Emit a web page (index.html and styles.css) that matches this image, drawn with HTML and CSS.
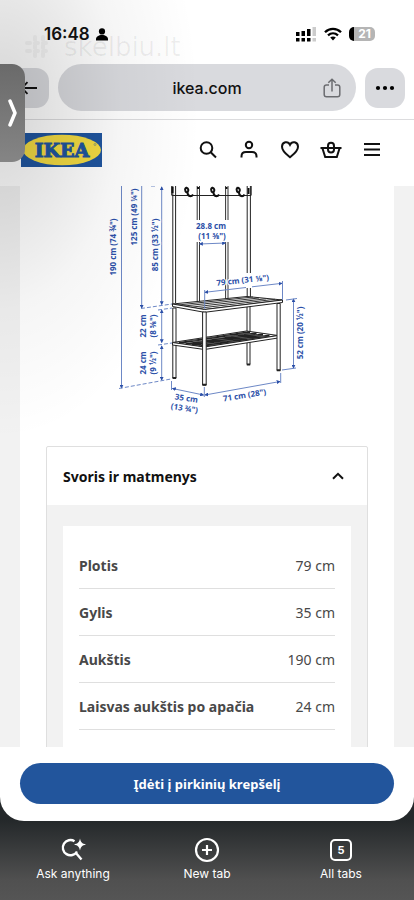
FILE: index.html
```
<!DOCTYPE html>
<html lang="lt">
<head>
  <meta charset="UTF-8">
  <meta name="viewport" content="width=device-width,initial-scale=1.0">
  <title>ikea.com</title>
  <link rel="stylesheet" href="styles.css">
</head>
<body>
  <div class="browser">
    <div class="status">
      <span class="time">16:48</span>
      <svg class="person" width="12" height="13" viewBox="0 0 12 13"><circle cx="6" cy="3.400" r="3.100"/><path d="M0 12.500V11c0-2.300 2.500-4 6-4s6 1.700 6 4v1.500z"/></svg>
      <div class="status-right">
        <svg width="21" height="15" viewBox="0 0 21 15">
          <path d="M0 5h3.500v4H0zM5.500 4H9v5H5.500zM11 2h3.500v7H11zM0 11h3.500v3.500H0zM5.500 11H9v3.500H5.500zM11 11h3.500v3.500H11z"/>
          <path fill="#ccc" d="M16.500 0H20v9h-3.500zM16.500 11H20v3.500h-3.500z"/>
        </svg>
        <svg width="18" height="14" viewBox="0 0 18 14">
          <path d="M1 5.200C5.500.7 12.500.7 17 5.200M4 8.400c3-2.700 7-2.700 10 0" fill="none" stroke="#000" stroke-width="2.300"/>
          <path d="M9 13.500l-2.800-2.900c1.600-1.400 4-1.400 5.600 0z"/>
        </svg>
        <span class="battery">21</span>
      </div>
    </div>

    <div class="toolbar">
      <button class="round-btn" aria-label="Back">
        <svg width="18" height="14" viewBox="0 0 18 14"><path d="M17 7H2M7.500 1.200L1.800 7l5.700 5.800" fill="none" stroke="#111" stroke-width="1.800"/></svg>
      </button>
      <div class="address">
        <a href="#">ikea.com</a>
        <button class="share" aria-label="Share">
          <svg width="18" height="20" viewBox="0 0 18 20"><path d="M6 7H3.500C2 7 1.200 7.800 1.200 9.200v7.300c0 1.500.8 2.300 2.300 2.300h11c1.500 0 2.300-.8 2.300-2.300V9.200C16.800 7.800 16 7 14.500 7H12M9 13.500V1.500M5.300 4.800L9 1.200l3.700 3.600" fill="none" stroke="#6b6c70" stroke-width="1.500"/></svg>
        </button>
      </div>
      <button class="round-btn" aria-label="More">
        <svg width="20" height="6" viewBox="0 0 20 6"><circle cx="3" cy="3" r="2.100"/><circle cx="10" cy="3" r="2.100"/><circle cx="17" cy="3" r="2.100"/></svg>
      </button>
    </div>

    <header class="shop-header">
      <a class="logo" href="#" aria-label="IKEA">
        <svg width="81" height="34" viewBox="0 0 81 34">
          <path fill="#1f559f" d="M0 0h81v34H0z"/>
          <ellipse cx="41" cy="17" rx="39" ry="15.300" fill="#f4dc43"/>
          <text x="41" y="23.500" class="logo-text">IKEA</text>
          <circle cx="74" cy="11.500" r="1" fill="none" stroke="#1f559f" stroke-width=".4"/>
        </svg>
      </a>
      <nav class="shop-nav">
        <button aria-label="Search"><svg width="24" height="24" viewBox="0 0 24 24"><circle cx="10.500" cy="10" r="5.800"/><path d="M14.700 14.300l5.300 5.200"/></svg></button>
        <button aria-label="Account"><svg width="24" height="24" viewBox="0 0 24 24"><circle cx="12" cy="7" r="3.200"/><path d="M4.500 19.500v-1.200c0-2.700 2-4.300 4.500-4.300h6c2.500 0 4.500 1.600 4.500 4.300v1.200"/></svg></button>
        <button aria-label="Favourites"><svg width="24" height="24" viewBox="0 0 24 24"><path d="M12 19.200C9.500 17.200 4 13.500 4 8.800c0-5 6-6.300 8-2.100 2-4.200 8-2.900 8 2.100 0 4.700-5.500 8.400-8 10.400z"/></svg></button>
        <button aria-label="Cart"><svg width="24" height="24" viewBox="0 0 24 24"><path d="M1.500 10h21M3.500 10.500l2.700 8.500h11.600l2.700-8.500"/><path d="M9 10.500V8c0-4.200 6-4.200 6 0v3.500c0 4-6 4-6 0z"/></svg></button>
        <button aria-label="Menu"><svg width="24" height="24" viewBox="0 0 24 24"><path d="M4 6h16M4 11.500h16M4 17h16"/></svg></button>
      </nav>
    </header>

    <main class="page">
      <div class="sheet">
        <svg class="drawing" viewBox="20 186 374 237" role="img" aria-label="Matmenys">
          <defs>
            <marker id="tip" viewBox="0 0 6 6" refX="5" refY="3" markerWidth="4" markerHeight="4" markerUnits="userSpaceOnUse" orient="auto-start-reverse"><path d="M0 0l6 3-6 3z" fill="#2b4fa8"/></marker>
          </defs>

          <!-- back posts and hook rail -->
          <g class="frame">
            <path d="M172.800 186v118M175.600 186v117M247.200 186v111M250.400 186v111"/>
            <path class="inner" d="M197.200 186v116M199.500 186v116M225.600 186v113M228 186v113"/>
            <path d="M172 195.500h79M171.700 186v9.500M251.200 186v9.500"/>
            <path class="hook" d="M186 187.500c-2 2 0 6 1.500 4.500s1-4-1.500-4.500M187.500 192c0 5 4 5 5.500 2.500M212 187.500c-2 2 0 6 1.500 4.500s1-4-1.500-4.500M213.500 192c0 5 4 5 5.500 2.500M237.500 187.500c-2 2 0 6 1.500 4.500s1-4-1.500-4.500M239 192c0 5 4 5 5.500 2.500M172.500 187v6M198 187v2M226.500 187v2M248.500 188v6"/>
          </g>

          <!-- legs behind the shelf -->
          <g class="leg">
            <path d="M172.800 308h3.200v70h-3.200zM247 303h3v61.500h-3z"/>
          </g>

          <!-- lower shelf -->
          <g class="frame">
            <path class="board" d="M172.500 342.500L246.500 331l31.500 4.500-73.500 11.500z"/>
            <path class="slat" d="M179 343l71-11M185.500 344.200l71-11M192 345.300l71-11M198.500 346.400l71-11"/>
            <path class="fine" d="M190 340l30 5M207 337l30 5M224 334.500l30 5M238 332.500l30 5"/>
            <path class="board" d="M172.500 342.500l32 4.500 73.500-11.500v2.500l-73.500 11.500-32-4.500z"/>
          </g>

          <!-- seat -->
          <g class="frame">
            <path class="board" d="M172.500 304L247 296.500l35.500 3.500-78 9.500z"/>
            <path class="seat-line" d="M178 305l75-8M184 306l75-8M191 307.200l75-8.400M198 308.300l77-9"/>
            <path class="board" d="M172.500 304l32 5.500L282.500 300v2.500l-78 9.800-32-5.800z"/>
          </g>

          <!-- front legs -->
          <g class="leg">
            <path d="M202.600 312h3.600v73h-3.600zM277 303.500h3.200v67H277z"/>
            <path class="foot" d="M202.400 384.800h4M172.600 378h3.600M276.800 370.300h3.600M246.800 364.500h3.400"/>
          </g>

          <g class="dim">
            <path marker-end="url(#tip)" d="M121.500 186v202"/>
            <path marker-end="url(#tip)" d="M141.700 186v122"/>
            <path marker-start="url(#tip)" marker-end="url(#tip)" d="M161.700 187v117.500"/>
            <path marker-start="url(#tip)" marker-end="url(#tip)" d="M161.700 310v32.500"/>
            <path marker-start="url(#tip)" marker-end="url(#tip)" d="M161.700 346v34"/>
            <path marker-start="url(#tip)" marker-end="url(#tip)" d="M293.500 299v69"/>
            <path marker-start="url(#tip)" marker-end="url(#tip)" d="M199.500 244l26-1"/>
            <path marker-start="url(#tip)" marker-end="url(#tip)" d="M172.500 388.500l31 6.500"/>
            <path marker-start="url(#tip)" marker-end="url(#tip)" d="M205 395l75-13.500"/>
            <path marker-start="url(#tip)" marker-end="url(#tip)" d="M205 292.300l77-9"/>
            <path d="M204.700 290v19M282.500 281v19M171.500 381v9M204.300 387v10M280.700 373v10M286 300l11-1.500M282 370l14-2"/>
            <path class="dash" d="M119 388.500l52-9.500M141 308.500l31-4.500M158 310l14-2M158 345l14-2M151 186h6"/>
          </g>

          <path fill="#fff" d="M195 220h34v22h-34zM246 273h6v15h-6z"/>
          <g class="dim-text">
            <text transform="translate(116 247) rotate(-90)">190 cm (74 ¾")</text>
            <text transform="translate(137 217) rotate(-90)">125 cm (49 ¼")</text>
            <text transform="translate(158 245) rotate(-90)">85 cm (33 ½")</text>
            <text x="211" y="229">28.8 cm</text>
            <text x="212" y="239">(11 ⅜")</text>
            <text transform="translate(243 283) rotate(-6)">79 cm (31 ⅛")</text>
            <text transform="translate(146 326) rotate(-90)">22 cm</text>
            <text transform="translate(156 326) rotate(-90)">(8 ⅝")</text>
            <text transform="translate(146 363) rotate(-90)">24 cm</text>
            <text transform="translate(156 363) rotate(-90)">(9 ½")</text>
            <text transform="translate(303 333) rotate(-90)">52 cm (20 ½")</text>
            <text transform="translate(186 401) rotate(9)">35 cm</text>
            <text transform="translate(184 411) rotate(9)">(13 ¾")</text>
            <text transform="translate(245 398) rotate(-9)">71 cm (28")</text>
          </g>
        </svg>

        <section class="accordion">
          <button class="accordion-head" aria-expanded="true">
            Svoris ir matmenys
            <svg width="12" height="8" viewBox="0 0 12 8"><path d="M1 6.800l5-5 5 5" fill="none" stroke="#111" stroke-width="2"/></svg>
          </button>
          <div class="accordion-body">
            <table class="specs">
              <tr><th scope="row">Plotis</th><td>79 cm</td></tr>
              <tr><th scope="row">Gylis</th><td>35 cm</td></tr>
              <tr><th scope="row">Aukštis</th><td>190 cm</td></tr>
              <tr><th scope="row">Laisvas aukštis po apačia</th><td>24 cm</td></tr>
            </table>
          </div>
        </section>
      </div>
    </main>

    <div class="buy">
      <button class="buy-btn">Įdėti į pirkinių krepšelį</button>
    </div>

    <div class="shade"></div>
    <div class="watermark">
      <svg width="34" height="26" viewBox="0 0 34 26"><path d="M13 3v20M21 3v20M5 9h24M5 17h24" stroke-width="4" stroke-linecap="round" stroke-dasharray="3 5"/></svg>
      <span>skelbiu.lt</span>
    </div>
    <button class="handle" aria-label="Open">
      <svg width="10" height="28" viewBox="0 0 10 28"><path d="M2 2l5 12-5 12" fill="none" stroke="#fff" stroke-width="3.500" stroke-linecap="round" stroke-linejoin="round"/></svg>
    </button>
  </div>

  <nav class="tabbar">
    <button>
      <svg width="26" height="26" viewBox="0 0 26 26"><path d="M14.500 4.200A7.600 7.600 0 1 0 17 14.500M15.500 15.500l6 7" fill="none" stroke="#fff" stroke-width="2.400"/><path d="M20 1.500c.8 3.800 2 5 6 6-4 1-5.200 2.200-6 6-.8-3.800-2-5-6-6 4-1 5.200-2.200 6-6z" fill="#fff"/></svg>
      Ask anything
    </button>
    <button>
      <svg width="26" height="26" viewBox="0 0 26 26" fill="none" stroke="#fff" stroke-width="2.200"><circle cx="13" cy="13" r="11"/><path d="M13 8v10M8 13h10"/></svg>
      New tab
    </button>
    <button>
      <span class="tab-count">5</span>
      All tabs
    </button>
  </nav>
</body>
</html>
```
FILE: styles.css
```
* {
  box-sizing: border-box;
}
body {
  margin: 0;
  height: 100vh;
  display: flex;
  flex-direction: column;
  background: linear-gradient(#24282a 0, #24282a calc(100vh - 80px), #505050 calc(100vh - 20px), #555 100vh);
  font-family: "Noto Sans", sans-serif;
  color: #111;
}
button {
  border: none;
  background: none;
  padding: 0;
  margin: 0;
  font-family: inherit;
  color: inherit;
  cursor: pointer;
}
svg {
  display: block;
}
.browser {
  position: relative;
  flex: 1;
  min-height: 0;
  display: flex;
  flex-direction: column;
  background: #fff;
  border-radius: 0 0 24px 24px;
  overflow: hidden;
}

/* status bar */
.status {
  display: flex;
  align-items: center;
  height: 64px;
  padding: 4px 39px 0 44px;
  font-family: Inter, sans-serif;
}
.time {
  font-size: 17px;
  font-weight: 600;
  line-height: 18px;
}
.person {
  margin-left: 6px;
}
.status-right {
  margin-left: auto;
  display: flex;
  align-items: center;
  gap: 7px;
}
.battery {
  width: 26px;
  height: 14px;
  padding-left: 5px;
  border-radius: 5px;
  background: linear-gradient(90deg, #000 20%, #b5b5b5 20%);
  color: #fff;
  font-size: 12px;
  font-weight: 700;
  line-height: 14px;
  text-align: center;
}

/* address bar */
.toolbar {
  display: flex;
  align-items: center;
  gap: 9px;
  padding: 0 9px 8px;
  border-bottom: 1px solid #dcdcde;
}
.round-btn {
  width: 40px;
  height: 40px;
  border-radius: 13px;
  background: #d9dade;
  display: flex;
  align-items: center;
  justify-content: center;
}
.address {
  position: relative;
  flex: 1;
  height: 47px;
  border-radius: 24px;
  background: #d9dade;
  display: flex;
  align-items: center;
  justify-content: center;
  font-family: Inter, sans-serif;
  font-size: 16px;
  font-weight: 500;
}
.address a {
  color: #111;
  text-decoration: none;
}
.share {
  position: absolute;
  right: 15px;
}

/* shop header */
.shop-header {
  display: flex;
  align-items: center;
  justify-content: space-between;
  height: 66px;
  padding: 0 30px 6px 21px;
}
.logo-text {
  font-family: "DejaVu Serif", serif;
  font-size: 19px;
  font-weight: 700;
  text-anchor: middle;
  fill: #1f559f;
  stroke: #1f559f;
  stroke-width: 1px;
}
.shop-nav {
  display: flex;
  gap: 17px;
}
.shop-nav svg {
  fill: none;
  stroke: #111;
  stroke-width: 2;
}

/* page */
.page {
  flex: 1;
  min-height: 0;
  overflow: hidden;
  background: #f2f2f2;
  padding: 0 20px;
}
.sheet {
  background: #fff;
  padding-bottom: 40px;
}
.drawing {
  width: 100%;
}
.frame path {
  fill: none;
  stroke: #222;
  stroke-width: 1;
}
.frame .inner {
  stroke: #333;
}
.frame .hook {
  stroke: #111;
  stroke-width: 2;
}
.frame .board {
  fill: #fff;
}
.frame .slat {
  stroke-width: 2;
}
.frame .fine {
  stroke: #555;
}
.frame .seat-line {
  stroke: #333;
  stroke-width: 1;
}
.leg path {
  fill: #fff;
  stroke: #222;
}
.leg .foot {
  stroke-width: 2;
}
.dim path {
  fill: none;
  stroke: #6d88c6;
  stroke-width: 1;
}
.dim .dash {
  stroke-dasharray: 4 2;
}
.dim-text text {
  font-size: 8px;
  font-weight: 700;
  text-anchor: middle;
  fill: #2b4fa8;
  stroke: #fff;
  stroke-width: 2px;
  paint-order: stroke;
}

.accordion {
  margin: 23px 26px 0;
  border: 1px solid #dfdfdf;
  border-radius: 2px;
}
.accordion-head {
  width: 100%;
  height: 58px;
  padding: 0 23px 0 16px;
  display: flex;
  align-items: center;
  justify-content: space-between;
  font-size: 14px;
  font-weight: 700;
}
.accordion-body {
  background: #f2f2f2;
  padding: 21px 16px;
}
.specs {
  width: 100%;
  border-collapse: separate;
  border-spacing: 0;
  background: #fff;
  padding: 16px 16px 40px;
  font-size: 14px;
  color: #484848;
}
.specs th,
.specs td {
  height: 47px;
  padding: 0;
  border-bottom: 1px solid #dfdfdf;
  text-align: left;
}
.specs td {
  text-align: right;
}

.buy {
  padding: 16px 20px 17px;
}
.buy-btn {
  width: 100%;
  height: 41px;
  border-radius: 21px;
  background: #22559c;
  color: #fff;
  font-size: 13px;
  font-weight: 700;
}

/* overlays */
.shade {
  position: absolute;
  inset: 0;
  background: radial-gradient(ellipse 200px 330px at 0 110px, rgba(0, 0, 0, 0.17), rgba(0, 0, 0, 0.04) 60%, transparent);
  pointer-events: none;
}
.watermark {
  position: absolute;
  top: 34px;
  left: 22px;
  display: flex;
  align-items: center;
  gap: 8px;
  font-family: "DejaVu Sans", sans-serif;
  font-size: 26px;
  line-height: 26px;
  color: rgba(0, 0, 0, 0.06);
  pointer-events: none;
}
.watermark svg {
  stroke: rgba(0, 0, 0, 0.04);
}
.handle {
  position: absolute;
  top: 64px;
  left: 0;
  width: 25px;
  height: 98px;
  padding-left: 8px;
  border-radius: 0 13px 13px 0;
  background: linear-gradient(#6a6a6a, #858585);
}

/* bottom bar */
.tabbar {
  display: flex;
  padding: 16px 6px 16px;
}
.tabbar button {
  flex: 1;
  display: flex;
  flex-direction: column;
  align-items: center;
  gap: 3px;
  height: 47px;
  color: #fff;
  font-family: Inter, sans-serif;
  font-size: 12px;
  line-height: 16px;
}
.tab-count {
  width: 22px;
  height: 22px;
  margin: 2px;
  border: 2px solid #fff;
  border-radius: 5px;
  font-size: 11px;
  font-weight: 700;
  line-height: 18px;
}
```
